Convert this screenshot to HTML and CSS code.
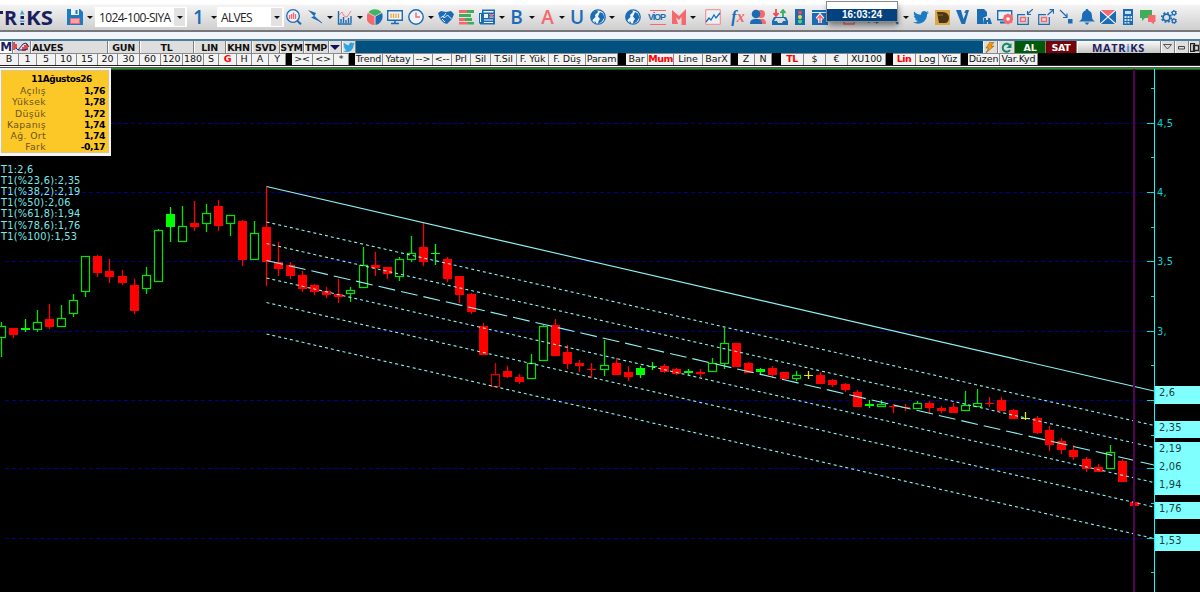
FILE: index.html
```html
<!DOCTYPE html>
<html lang="tr">
<head>
  <meta charset="UTF-8" />
  <meta name="viewport" content="width=device-width, initial-scale=1.0"/>
  <title>Matriks - ALVES</title>
  <link rel="stylesheet" href="styles.css">
</head>
<body>
  <svg class="defs">
    <symbol id="globe" viewBox="0 0 16 16">
      <circle cx="8" cy="8" r="7.200" fill="#f2f6fa" stroke="#1b6cb5" stroke-width="1.300"/>
      <path d="M3 3 7 1l1 2-3 3 .5 2L3 10.500 2 12C0 9 .5 5 3 3zM10 3l3 1.500 1.500 4-3 4.500-3.500 2 .5-3 1.500-2L8 7.500zM4 12l2 1v2z" fill="#1b6cb5"/>
    </symbol>
    <symbol id="bird" viewBox="0 0 16 16">
      <path d="M15.8 3.4c-.6.3-1.200.4-1.900.5.7-.4 1.200-1 1.400-1.800-.6.4-1.300.6-2 .8C11.300 .8 7.600 2.200 8 5.800 5.300 5.700 3 4.500 1.300 2.400.3 4.200.9 5.900 2.300 6.900c-.5 0-1-.2-1.400-.4 0 1.500 1 2.800 2.500 3.200-.5.1-1 .1-1.400 0 .4 1.200 1.600 2.200 3 2.200C3.600 13 2 13.500.2 13.300c5.700 3.500 13.800.5 13.900-8.200.7-.5 1.300-1 1.700-1.700z"/>
    </symbol>
  </svg>

  <div class="toolbar">
    <div class="logo">
      <svg width="55" height="24" viewBox="0 -5 55 24">
        <path d="M0 1h3v3H0z" fill="#1d1e5e"/>
        <text x="4" y="15" textLength="13" lengthAdjust="spacingAndGlyphs">R</text>
        <path d="M20 4.500 22 0l2.500 4.500z" fill="#3fa0dc"/>
        <path d="M20.500 6h3.500v3h-3.500zM20.500 13h3.500v2h-3.500z" fill="#1d1e5e"/>
        <path d="M20 10.500h4.500v1.500H20z" fill="#3fa0dc"/>
        <text x="26" y="15" textLength="27" lengthAdjust="spacingAndGlyphs">KS</text>
      </svg>
    </div>
    <svg class="icon" viewBox="0 0 16 16"><path d="M0 0h13l3 3v13H0z" fill="#1b7bc4"/><path d="M4 0h8v6H4z" fill="#eef4f8"/><path d="M8.500 1h2v4h-2z" fill="#1b7bc4"/><path d="M3 9h10v6H3z" fill="#f5686e"/><path d="M4 11h8M4 13h8" stroke="#fff" stroke-width=".8"/></svg>
    <i class="caret"></i>
    <div class="combo"><span>1024-100-SIYA</span><b><i class="caret"></i></b></div>
    <div class="glyph">1</div>
    <i class="caret"></i>
    <div class="combo"><span>ALVES</span><b><i class="caret"></i></b></div>
    <svg class="icon" viewBox="0 0 16 16"><circle cx="7" cy="7" r="6.300" fill="#eef4fa" stroke="#1b6cb5" stroke-width="1.300"/><path d="M3.500 6v4M5.500 5v5M7.500 3.500V10M9.500 5v5" stroke="#f5686e" stroke-width="1.300"/><path d="m11.500 12 3.500 3.300" stroke="#1b6cb5" stroke-width="2"/></svg>
    <svg class="icon" viewBox="0 0 16 16"><path d="M1 1 9 4 7.500 7l7 6.500L4 8.500 7 7z" fill="#1b6cb5"/><path d="m11 11 4 3" stroke="#1b6cb5"/></svg>
    <i class="caret"></i>
    <svg class="icon" viewBox="0 0 16 16"><path d="M1.500 2v13h13M4 10v4M6.500 8v6M9 11v3M11.500 9v5M14 7v7" stroke="#1b6cb5" stroke-width="1.400" fill="none"/><path d="m2 6 3-3 2 4 3 1 4-6" stroke="#f5868c" fill="none"/></svg>
    <i class="caret"></i>
    <svg class="icon" viewBox="0 0 16 16"><path d="M7.500 7.500 1 4a7.500 7.500 0 0 0 6.500 12z" fill="#f5686e"/><path d="M8 7 1.500 3.500C4-.8 11.500-.8 14.500 3.500z" fill="#43b55e"/><path d="M8.500 7.500 15 4c2 5-1 11-6.500 12z" fill="#1b6cb5"/></svg>
    <svg class="icon" viewBox="0 0 16 16"><path d="M.7 1.700h14.600v9.600H.7z" fill="#eef4fa" stroke="#1b6cb5" stroke-width="1.400"/><path d="M4 4.500V9M6.500 4.500V9M9 4.500V9M11.500 4.500V9" stroke="#f5a030" stroke-width="1.300"/><path d="M8 11v3M4 14.500h8" stroke="#1b6cb5" stroke-width="1.600"/></svg>
    <svg class="icon" viewBox="0 0 16 16"><circle cx="8" cy="8" r="7.200" fill="#eef4fa" stroke="#1b6cb5" stroke-width="1.400"/><path d="M8 3.500V8h4" stroke="#f5686e" stroke-width="1.400" fill="none"/></svg>
    <i class="caret"></i>
    <svg class="icon" viewBox="0 0 16 16"><path d="m0 4 3-2 5 1 5-1 3 3-2 5-5 5-3-1-4-4z" fill="#1b6cb5"/><path d="m8 4-3 4 2 .5L9.500 6l4 4M4 10l3 3M2.500 9 5 7" stroke="#fff" stroke-width=".9" fill="none"/></svg>
    <svg class="icon" viewBox="0 0 16 16"><path d="M0 1h8v3H0zM0 9h6v3H0zM0 13h9v2.500H0z" fill="#f5686e"/><path d="M8 1h7v3H8zM0 5h12v3H0zM6 9h7v3H6zM9 13h6v2.500H9z" fill="#3fae5b"/></svg>
    <svg class="icon" viewBox="0 0 16 16"><path d="M3 .5h13v15H1.500L0 14V4h3z" fill="#1b6cb5"/><path d="M4.500 2h10v1.500h-10zM5 5h4v4H5zM10.500 5h4v1h-4zM10.500 7.500h4v1h-4zM5 10.500h9v1H5zM5 13h9v1H5zM1 5h1v8H1z" fill="#eef4fa"/><path d="M11 5h3v3h-3z" fill="#f5686e"/></svg>
    <i class="caret"></i>
    <div class="glyph">B</div>
    <i class="caret"></i>
    <div class="glyph red">A</div>
    <i class="caret"></i>
    <div class="glyph">U</div>
    <svg class="icon"><use href="#globe"/></svg>
    <i class="caret"></i>
    <svg class="icon"><use href="#globe"/></svg>
    <div class="viop">VİOP</div>
    <svg class="icon" viewBox="0 0 16 16"><path d="m1 1 7 6 7-7v16h-4.500V8L8 11 5 8.500 7 15H1z" fill="#f5686e"/></svg>
    <i class="caret"></i>
    <svg class="icon" viewBox="0 0 16 16"><path d="M.7.7h14.600v14.600H.7z" fill="#edf1f5" stroke="#f5868c"/><path d="m1 13 3-4 2 2 3-5 2 3 4-5" stroke="#1b6cb5" stroke-width="1.300" fill="none"/></svg>
    <div class="fx">f<span>x</span></div>
    <svg class="icon" viewBox="0 0 16 16"><circle cx="11" cy="5" r="4" fill="#f5686e"/><path d="M8 10h4c3 0 4 2 4 5H8z" fill="#f5686e"/><circle cx="6" cy="5" r="4.300" fill="#1b6cb5"/><path d="M0 15c0-4 2-5 6-5s6 1 6 5z" fill="#1b6cb5"/></svg>
    <svg class="icon" viewBox="0 0 16 16"><path d="M2 8h12l2 4v4H0v-4zm0 4h3l1 2h4l1-2h3l-2-3H4z" fill="#1b6cb5"/><path d="M4 0v6M1.500 4 4 7l2.500-3" stroke="#f5484e" stroke-width="1.800" fill="none"/><path d="M11 8V2M8.500 4 11 1l2.500 3" stroke="#35b355" stroke-width="1.800" fill="none"/></svg>
    <svg class="icon" viewBox="0 0 16 16"><path d="M3 0h10v16H3z" fill="#1b6cb5"/><circle cx="8" cy="3.500" r="2" fill="#f5484e"/><circle cx="8" cy="8" r="2" fill="#f8d73a"/><circle cx="8" cy="12.500" r="2" fill="#4be05b"/></svg>
    <svg class="icon" viewBox="0 0 16 16"><path d="M0 1h16v15H0z" fill="#1b6cb5"/><path d="M0 3h16v1H0z" fill="#dce9f5"/><path d="M8 14V7M5 10l3-3.500L11 10" stroke="#fff" stroke-width="3.500" fill="none"/><path d="M8 14V7M5 10l3-3.500L11 10" stroke="#f5686e" stroke-width="1.500" fill="none"/></svg>
    <svg class="icon" viewBox="0 0 16 16"><path d="M3 5v10h10V5" stroke="#f5686e" fill="none" stroke-width="1.500"/></svg>
    <svg class="icon" viewBox="0 0 16 16"><path d="m0 13 4-2 3 2M8 14l4-3-2-3" stroke="#1b6cb5" stroke-width="2" fill="none"/></svg>
    <svg class="icon" viewBox="0 0 16 16"><path d="m7 8 5 7" stroke="#1b6cb5" stroke-width="2.200"/></svg>
    <i class="caret"></i>
    <svg class="icon" fill="#1b7bc4"><use href="#bird"/></svg>
    <svg class="icon" viewBox="0 0 16 16"><path d="M0 1h15v15H0z" fill="#dba848"/><path d="M2 3h5c5 0 7 3 7 6s-2 5-4 5H4z" fill="#4a3414"/><path d="M2 6h6" stroke="#b98a35" stroke-width=".7"/></svg>
    <svg class="icon" viewBox="0 0 16 16"><path d="M1 1h5l2.500 9L11 4l-2-.5L11 1h3L10 15H6.500z" fill="#1b6cb5"/></svg>
    <svg class="icon" viewBox="0 0 16 16"><path d="M1 0h7l3 3v4L7 9v6H1z" fill="#1b6cb5"/><path d="M8 9h2v2h2V9h2l2 6h-4v-2h-1v2H7z" fill="#1b6cb5"/></svg>
    <svg class="icon" viewBox="0 0 16 16"><path d="M.7 1.700h14v9H.7z" fill="#e9f1f8" stroke="#1b6cb5" stroke-width="1.400"/><path d="M3 13.500h6" stroke="#1b6cb5" stroke-width="2"/><circle cx="11" cy="10" r="3.500" fill="none" stroke="#f5686e" stroke-width="2.800"/><path d="M11 4.500v11M5.500 10h11M7.100 6.100l7.800 7.800M7.100 13.900l7.800-7.800" stroke="#f5686e" stroke-width="1.200"/><circle cx="11" cy="10" r="1.800" fill="#fff"/></svg>
    <svg class="icon" viewBox="0 0 16 16"><path d="M8 5.700H.7v9.600h10.600V8" fill="none" stroke="#1b6cb5" stroke-width="1.200"/><path d="M3.500 8.500h5v4h-5z" fill="none" stroke="#f5686e" stroke-width="1.400"/><path d="m16 0-5.500 5M10.500 2v3.500H14" stroke="#1b6cb5" fill="none" stroke-width="1.200"/></svg>
    <svg class="icon" viewBox="0 0 16 16"><path d="M8 5.700H.7v9.600h10.600V8" fill="none" stroke="#1b6cb5" stroke-width="1.200"/><path d="M3.500 8.500h5v4h-5z" fill="none" stroke="#f5686e" stroke-width="1.400"/><path d="m9.500 6 6-5.300M11.500.7h4v4" stroke="#1b6cb5" fill="none" stroke-width="1.200"/></svg>
    <svg class="icon" viewBox="0 0 16 16"><path d="m2 1 7 7M9 4.500V8.500H5" stroke="#1b6cb5" fill="none" stroke-width="1.200"/><path d="M10 10h4.500v4.500H10z" fill="#1b6cb5"/></svg>
    <svg class="icon" viewBox="0 0 16 16"><path d="M8 0c1 0 1.500.6 1.500 1.600C12.500 2.600 13 5 13 8c0 2 1 3 3 4.500H0C2 11 3 10 3 8c0-3 .5-5.400 3.500-6.400C6.500.6 7 0 8 0zM5.500 13.500h5L8 16z" fill="#1b6cb5"/></svg>
    <svg class="icon" viewBox="0 0 16 16"><path d="M0 1h16v14H0z" fill="#1b6cb5"/><path d="M0 1h16L8 8z" fill="#f5686e"/><path d="m0 1 16 14M16 1 0 15" stroke="#eef4fa" stroke-width="1.200"/></svg>
    <svg class="icon" viewBox="0 0 16 16"><path d="M3 0h10v16H3z" fill="#1b6cb5"/><path d="M5 2h6v3H5zM4.500 7h2v2h-2zM7.500 7h2v2h-2zM10.500 7h1.500v2h-1.500zM4.500 10h2v2h-2zM7.500 10h2v2h-2zM10.500 10h1.500v2h-1.500zM4.500 13h2v1.500h-2zM7.500 13h2v1.500h-2z" fill="#cfe2f3"/></svg>
    <svg class="icon" viewBox="0 0 16 16"><path d="M0 1h12v8H5l-3 3V9H0z" fill="#3fae5b"/><path d="M8 6h7.500v7H14v2.500L11 13H8z" fill="#f5686e"/></svg>
    <svg class="icon" viewBox="0 0 16 16"><g fill="none" stroke="#1b6cb5"><circle cx="5.500" cy="8.500" r="3.400" stroke-width="1.800"/><circle cx="5.500" cy="8.500" r="4.800" stroke-width="1.600" stroke-dasharray="1.900 1.870"/><circle cx="13" cy="4" r="1.800" stroke-width="1.300"/><circle cx="13" cy="4" r="2.600" stroke-dasharray="1.360"/><circle cx="13" cy="12" r="1.800" stroke-width="1.300"/><circle cx="13" cy="12" r="2.600" stroke-dasharray="1.360"/></g></svg>
    <div class="clock">16:03:24</div>
  </div>

  <div class="symbol-bar">
    <span class="m">M</span>
    <span><svg width="17" height="12" viewBox="0 0 17 12"><path d="M1 1v8M3 3v5M10 6v4M12 4v6M14 3v5" stroke="#e01b1b" stroke-width="1.500"/><path d="m3 7 2 2 5-6 3-1 3 4M5 9h6l4-1" stroke="#26267c" fill="none"/></svg></span>
    <span class="left">ALVES</span>
    <span>GUN</span>
    <span>TL</span>
    <span>LIN</span>
    <span>KHN</span>
    <span>SVD</span>
    <span>SYM</span>
    <span>TMP</span>
    <span><svg width="10" height="5"><path d="M0 0h10L5 5z" fill="#10105a"/></svg></span>
    <span><svg width="12" height="12" fill="#2fa3df"><use href="#bird"/></svg></span>
    <div></div>
    <span><svg width="10" height="11" viewBox="0 0 10 11"><path d="M5 0h4L6 4h3L1 11l2.500-5H1z" fill="#f59a0c" stroke="#7a4a05" stroke-width=".5"/></svg></span>
    <span><svg width="11" height="11" viewBox="0 0 11 11"><path d="M9 3.500A4 4 0 1 0 9 8" stroke="#0e8a6a" stroke-width="2" fill="none"/><path d="M10.500 1v5h-5z" fill="#0e8a6a"/></svg></span>
    <span class="buy">AL</span>
    <span class="sell">SAT</span>
    <span class="brand">MATR<em>i</em>KS</span>
    <span><svg width="9" height="6"><path d="M.5.500h8l-4 4.500z" fill="none" stroke="#555"/></svg></span>
    <span><svg width="7" height="5"><path d="M.5 1.500h6v2.500h-6z" fill="none" stroke="#444"/></svg></span>
    <span><svg width="9" height="9"><path d="M.5.500h4v8h-4zM3.500 2.500h5v5h-5z" fill="none" stroke="#222" stroke-width="1.300"/></svg></span>
  </div>

  <div class="period-bar">
    <span>B</span><span>1</span><span>5</span><span>10</span><span>15</span><span>20</span><span>30</span><span>60</span><span>120</span><span>180</span><span>S</span><span class="on">G</span><span>H</span><span>A</span><span>Y</span>
    <i></i>
    <span>&gt;&lt;</span><span>&lt;&gt;</span><span>*</span>
    <i></i>
    <span>Trend</span><span>Yatay</span><span>--&gt;</span><span>&lt;--</span><span>Prl</span><span>Sil</span><span>T.Sil</span><span>F. Yük</span><span>F. Düş</span><span>Param</span>
    <i></i>
    <span>Bar</span><span class="on">Mum</span><span>Line</span><span>BarX</span>
    <i></i>
    <span>Z</span><span>N</span>
    <i></i>
    <span class="on">TL</span><span>$</span><span>€</span><span>XU100</span>
    <i></i>
    <span class="on">Lin</span><span>Log</span><span>Yüz</span>
    <i></i>
    <span>Düzen</span><span>Var.Kyd</span>
  </div>

  <div class="chart">
    <svg id="plot" width="1200" height="523" viewBox="0 69 1200 523"></svg>

    <div class="info">
      <h2>11Ağustos26</h2>
      <dl>
        <dt>Açılış</dt><dd>1,76</dd>
        <dt>Yüksek</dt><dd>1,78</dd>
        <dt>Düşük</dt><dd>1,72</dd>
        <dt>Kapanış</dt><dd>1,74</dd>
        <dt>Ağ. Ort</dt><dd>1,74</dd>
        <dt>Fark</dt><dd>-0,17</dd>
      </dl>
    </div>

    <div class="levels">
      <p>T1:2,6</p>
      <p>T1(%23,6):2,35</p>
      <p>T1(%38,2):2,19</p>
      <p>T1(%50):2,06</p>
      <p>T1(%61,8):1,94</p>
      <p>T1(%78,6):1,76</p>
      <p>T1(%100):1,53</p>
    </div>
  </div>

  <script src="chart.js"></script>
</body>
</html>
```
FILE: styles.css
```css
* {
  box-sizing: border-box;
}

body {
  margin: 0;
  width: 1200px;
  height: 592px;
  overflow: hidden;
  background: #fff;
  font-family: "DejaVu Sans", Verdana, sans-serif;
}

.defs {
  display: none;
}

/* main toolbar */
.toolbar {
  position: relative;
  display: grid;
  grid-template-columns:
    66px 18px 11px 92px 23px 7px 67px 20px 21px 10px 20px 9px 21px 20px 22px 7px
    23px 19px 22px 8px 21px 10px 21px 8px 22px 19px 10px 31px 20px 21px 8px 31px
    20px 20px 23px 17px 24px 34px 20px 16px 8px 22px 21px 20px 21px 21px 20px
    21px 20px 21px 21px 19px 22px 20px;
  grid-template-rows: 26px;
  align-items: center;
  justify-items: center;
  height: 32px;
  padding-top: 4px;
  background: linear-gradient(#fff 4px, #f4f4f4 5px, #d0d0d0 29px);
  border-bottom: 2px solid #77777b;
}

.icon {
  width: 16px;
  height: 16px;
}

.caret {
  border: 3px solid transparent;
  border-top-color: #111;
  border-bottom: 0;
}

.logo {
  justify-self: start;
}

.logo svg {
  display: block;
}

.logo text {
  font: bold 19px "Open Sans", sans-serif;
  fill: #1d1e5e;
}

.combo {
  display: flex;
  align-items: center;
  justify-content: space-between;
  width: 100%;
  height: 20px;
  padding: 0 2px 0 4px;
  background: #fff;
  font: 12px "Open Sans", sans-serif;
  letter-spacing: -0.65px;
  color: #222;
}

.combo span {
  white-space: nowrap;
}

.combo b {
  display: flex;
  align-items: center;
  justify-content: center;
  width: 11px;
  height: 18px;
  background: #e2e2e2;
}

.glyph {
  font: 600 19px/20px "Open Sans", sans-serif;
  color: #1b6cb5;
}

.red {
  color: #f5686e;
}

.viop {
  width: 16px;
  border: solid #f5686e;
  border-width: 1px 0;
  color: #1b6cb5;
  font: bold 9px/13px "Liberation Sans Narrow", "Liberation Sans", sans-serif;
  letter-spacing: -1.2px;
  text-indent: -2px;
  white-space: nowrap;
}

.fx {
  font: italic bold 16px/20px "Liberation Serif", serif;
  color: #1b6cb5;
}

.fx span {
  color: #f5686e;
}

.clock {
  position: absolute;
  left: 827px;
  top: 2px;
  width: 70px;
  height: 19px;
  border-top: 7px solid #fff;
  background: #04427f;
  box-shadow: 0 0 0 1px #8a8a8a, 1px 4px 6px rgba(0, 0, 0, 0.5);
  color: #fff;
  font: bold 10px/12px "Liberation Sans", sans-serif;
  text-align: center;
}

/* symbol row */
.symbol-bar {
  display: grid;
  grid-template-columns:
    13px 18px 77px 32px 54px 32px 26px 28px 24px 25px 13px 14px 627px
    15px 17px 31px 31px 84px 14px 14px 11px;
  height: 21px;
  padding-top: 7px;
  background: #005080;
  box-shadow: inset 0 7px #f1f5fc;
  font-size: 9.5px;
  font-weight: bold;
  letter-spacing: -0.3px;
  color: #111;
}

.symbol-bar > * {
  border-top: 2px solid #4c7d9b;
  height: 14px;
}

.symbol-bar span {
  display: flex;
  align-items: center;
  justify-content: center;
  background: #dedede;
  border-right: 1px solid #808080;
  box-shadow: inset 1px 0 #fafafa;
  line-height: 11px;
}

.symbol-bar .left {
  justify-content: flex-start;
  padding-left: 1px;
}

.symbol-bar .m {
  background: #fff;
  color: #1d1e5e;
  font-size: 12px;
}

.symbol-bar .buy {
  background: #005a08;
  box-shadow: none;
  color: #fff;
}

.symbol-bar .sell {
  background: #780008;
  box-shadow: none;
  color: #fff;
}

.symbol-bar .brand {
  background: linear-gradient(#fafafa, #c4c4c4);
  color: #1d1e5e;
  font: bold 11px/11px "Open Sans", sans-serif;
  letter-spacing: 0.7px;
}

.brand em {
  color: #3f8fd0;
  font-style: normal;
}

/* period and drawing buttons */
.period-bar {
  display: grid;
  grid-template-columns:
    19px 18px 19px 21px 21px 20px 22px 21px 22px 21px 15px 18px 15px 17px 17px
    6px 21px 21px 15px
    6px 28px 31px 19px 19px 19px 20px 26px 32px 37px 32px
    8px 22px 26px 29px 28px
    7px 17px 17px
    9px 23px 22px 22px 38px
    7px 23px 23px 22px
    7px 32px 38px;
  height: 16px;
  padding-bottom: 4px;
  background: #000;
  box-shadow: inset 0 -1px #2f8a35, inset 0 -2px #555, inset 0 -3px #fff, inset 0 -4px #222;
  font-size: 9.5px;
  letter-spacing: -0.1px;
  color: #111;
}

.period-bar span {
  background: #f3f3f3;
  border: 1px solid #8a8a8a;
  border-width: 1px 1px 0 0;
  line-height: 10px;
  text-align: center;
  white-space: nowrap;
}

.period-bar .on {
  color: #f00;
  font-weight: bold;
  letter-spacing: -0.5px;
}

/* chart */
.chart {
  position: relative;
  height: 523px;
  background: #000;
}

#plot {
  display: block;
}

#plot text {
  font-size: 9.8px;
  letter-spacing: 0.2px;
}

.info {
  position: absolute;
  left: 0;
  top: -1px;
  width: 111px;
  height: 88px;
  padding: 4px 4px 0 3px;
  background: #fcc828;
  border: 2px solid #f4f4f4;
  border-left-width: 1px;
  border-bottom-width: 3px;
  box-shadow: inset 0 0 0 1px #d8c890;
  font-size: 9.3px;
  line-height: 11.2px;
}

.info h2 {
  margin: 0 0 0 14px;
  font-size: 9px;
  line-height: 11.2px;
  text-align: center;
  letter-spacing: -0.5px;
}

.info dl {
  display: grid;
  grid-template-columns: 42px 1fr;
  margin: 0;
  text-align: right;
}

.info dt {
  color: #6c5420;
  letter-spacing: 0.35px;
}

.info dd {
  margin: 0;
  font-weight: bold;
  letter-spacing: -0.5px;
}

.levels {
  position: absolute;
  left: 1px;
  top: 94.5px;
  color: #7fe8e8;
  font-size: 9.8px;
  line-height: 11.2px;
  letter-spacing: 0.25px;
}

.levels p {
  margin: 0;
}
```
FILE: chart.js
```js
const plot = document.getElementById('plot');

// [type, high, top, bottom, low]
// g/r = green/red, u/d = hollow green/red, y = yellow doji
const candles = [
  ['u', 322, 326, 338, 357], ['r', 328, 328, 335, 338], ['g', 319, 328, 330, 332],
  ['u', 310, 322, 330, 332], ['r', 304, 319, 327, 329], ['u', 305, 318, 327, 327],
  ['u', 294, 300, 314, 317], ['u', 256, 256, 292, 297], ['r', 255, 256, 273, 277],
  ['r', 259, 271, 277, 283], ['r', 270, 276, 283, 285], ['r', 279, 285, 311, 314],
  ['u', 267, 275, 289, 294], ['u', 229, 230, 282, 282], ['g', 207, 214, 227, 242],
  ['u', 206, 226, 242, 242], ['r', 201, 223, 227, 231], ['u', 204, 213, 224, 232],
  ['r', 200, 206, 226, 231], ['u', 215, 215, 224, 236], ['r', 220, 221, 260, 266],
  ['u', 221, 233, 260, 260], ['r', 187, 227, 262, 286], ['r', 242, 262, 269, 276],
  ['r', 262, 265, 276, 279], ['r', 271, 275, 289, 292], ['r', 284, 285, 292, 295],
  ['r', 287, 291, 295, 298], ['r', 279, 294, 297, 303], ['u', 287, 290, 294, 302],
  ['u', 247, 265, 288, 288], ['r', 252, 265, 268, 276], ['r', 267, 267, 274, 279],
  ['u', 257, 259, 277, 281], ['u', 236, 253, 260, 262], ['r', 223, 247, 262, 266],
  ['g', 244, 253, 254, 265], ['r', 257, 259, 279, 282], ['r', 276, 276, 295, 303],
  ['r', 293, 294, 312, 314], ['r', 323, 326, 355, 355], ['d', 363, 374, 387, 387],
  ['r', 366, 371, 377, 378], ['r', 374, 377, 382, 384], ['u', 354, 363, 379, 379],
  ['u', 325, 326, 361, 361], ['r', 319, 325, 356, 356], ['r', 345, 352, 364, 369],
  ['r', 360, 363, 366, 372], ['r', 363, 369, 370, 378], ['u', 340, 365, 370, 376],
  ['r', 358, 363, 375, 375], ['r', 366, 372, 377, 381], ['g', 366, 368, 375, 378],
  ['g', 362, 366, 367, 370], ['r', 364, 366, 372, 373], ['r', 368, 369, 374, 375],
  ['g', 369, 371, 373, 375], ['r', 369, 372, 374, 377], ['u', 358, 363, 372, 372],
  ['u', 328, 343, 364, 369], ['r', 343, 343, 367, 367], ['r', 362, 363, 373, 373],
  ['g', 368, 369, 372, 375], ['r', 366, 368, 375, 378], ['r', 372, 372, 379, 379],
  ['u', 371, 375, 379, 381], ['y', 371, 375, 376, 379], ['r', 372, 375, 384, 384],
  ['r', 379, 380, 385, 387], ['r', 383, 384, 390, 392], ['r', 390, 392, 407, 407],
  ['g', 400, 404, 406, 408], ['u', 400, 404, 407, 407], ['r', 404, 406, 407, 413],
  ['r', 404, 407, 408, 411], ['u', 401, 403, 409, 409], ['r', 401, 403, 408, 413],
  ['r', 406, 408, 411, 413], ['r', 403, 407, 413, 413], ['u', 391, 405, 411, 411],
  ['u', 389, 403, 407, 407], ['r', 397, 403, 404, 407], ['r', 397, 400, 411, 411],
  ['r', 409, 410, 419, 419], ['y', 412, 418, 419, 420], ['r', 416, 418, 433, 434],
  ['r', 426, 430, 445, 451], ['r', 438, 441, 450, 454], ['r', 445, 450, 457, 460],
  ['r', 457, 459, 469, 472], ['r', 464, 467, 472, 472], ['u', 445, 452, 469, 469],
  ['r', 459, 461, 482, 482], ['r', 501, 502, 506, 506]
];

const colors = { g: '#00ff00', u: '#00e400', r: '#ff0000', d: '#e00000', y: '#e6e600' };

function add(tag, attrs, text) {
  const el = document.createElementNS('http://www.w3.org/2000/svg', tag);
  for (const key in attrs) el.setAttribute(key, attrs[key]);
  if (text) el.textContent = text;
  plot.appendChild(el);
}

function line(x1, y1, x2, y2, stroke, dash, width) {
  add('line', { x1, y1, x2, y2, stroke, 'stroke-dasharray': dash || 'none', 'stroke-width': width || 1 });
}

// top border
add('rect', { x: 0, y: 69, width: 1200, height: 1, fill: '#1c5a20' });

// horizontal grid
[123.5, 192.5, 261.5, 331.5, 400.5, 468.5, 538.5].forEach(y => {
  line(5, y, 1147, y, '#00008c', '4 3');
});

// candles
candles.forEach(([type, high, top, bottom, low], i) => {
  const x = Math.round(1.5 + 12.05 * i - 0.5);
  const color = colors[type];
  const hollow = type === 'u' || type === 'd';
  line(x + 0.5, high, x + 0.5, top, color, '', 1.3);
  line(x + 0.5, bottom, x + 0.5, low, color, '', 1.3);
  if (hollow) {
    add('rect', { x: x - 3.5, y: top + 0.5, width: 8, height: bottom - top - 1, fill: '#000', stroke: color, 'stroke-width': 1.2 });
  } else {
    add('rect', { x: x - 4, y: top, width: 9, height: bottom - top, fill: color });
  }
});

// regression channel
[
  [186.5, 391, ''], [222, 425.5, '3 3'], [243.5, 447.5, '3 3'], [260.5, 465, '17 6'],
  [278, 482.5, '3 3'], [302.5, 507, '3 3'], [334, 538.5, '3 3']
].forEach(([from, to, dash]) => line(266.5, from, 1154, to, '#8cf4f4', dash, 1.1));

// cursor and price axis
line(1134, 69, 1134, 592, '#540054', '', 2);
line(1154.5, 69, 1154.5, 592, '#00ffff');
[123.5, 192.5, 261.5, 331.5, 400.5, 468.5, 538.5].forEach(y => line(1147, y, 1154, y, '#00e0e0'));
[88.5, 157.5, 227.5, 296.5, 365.5, 435.5, 503.5, 572.5].forEach(y => line(1151, y, 1154, y, '#00e0e0'));
[['4,5', 127], ['4,', 196], ['3,5', 265], ['3,', 334.5]].forEach(([t, y]) => {
  add('text', { x: 1157, y, fill: '#00d8d8' }, t);
});

// level tags
[[386, 18], [421, 17], [442, 53], [502, 17], [534, 17]].forEach(([y, height]) => {
  add('rect', { x: 1155, y, width: 45, height, fill: '#80ffff' });
});
[['2,6', 396], ['2,35', 430.5], ['2,19', 452], ['2,06', 470], ['1,94', 487.5], ['1,76', 512], ['1,53', 543.5]].forEach(([t, y]) => {
  add('text', { x: 1159, y, fill: '#143c3c' }, t);
});
```
